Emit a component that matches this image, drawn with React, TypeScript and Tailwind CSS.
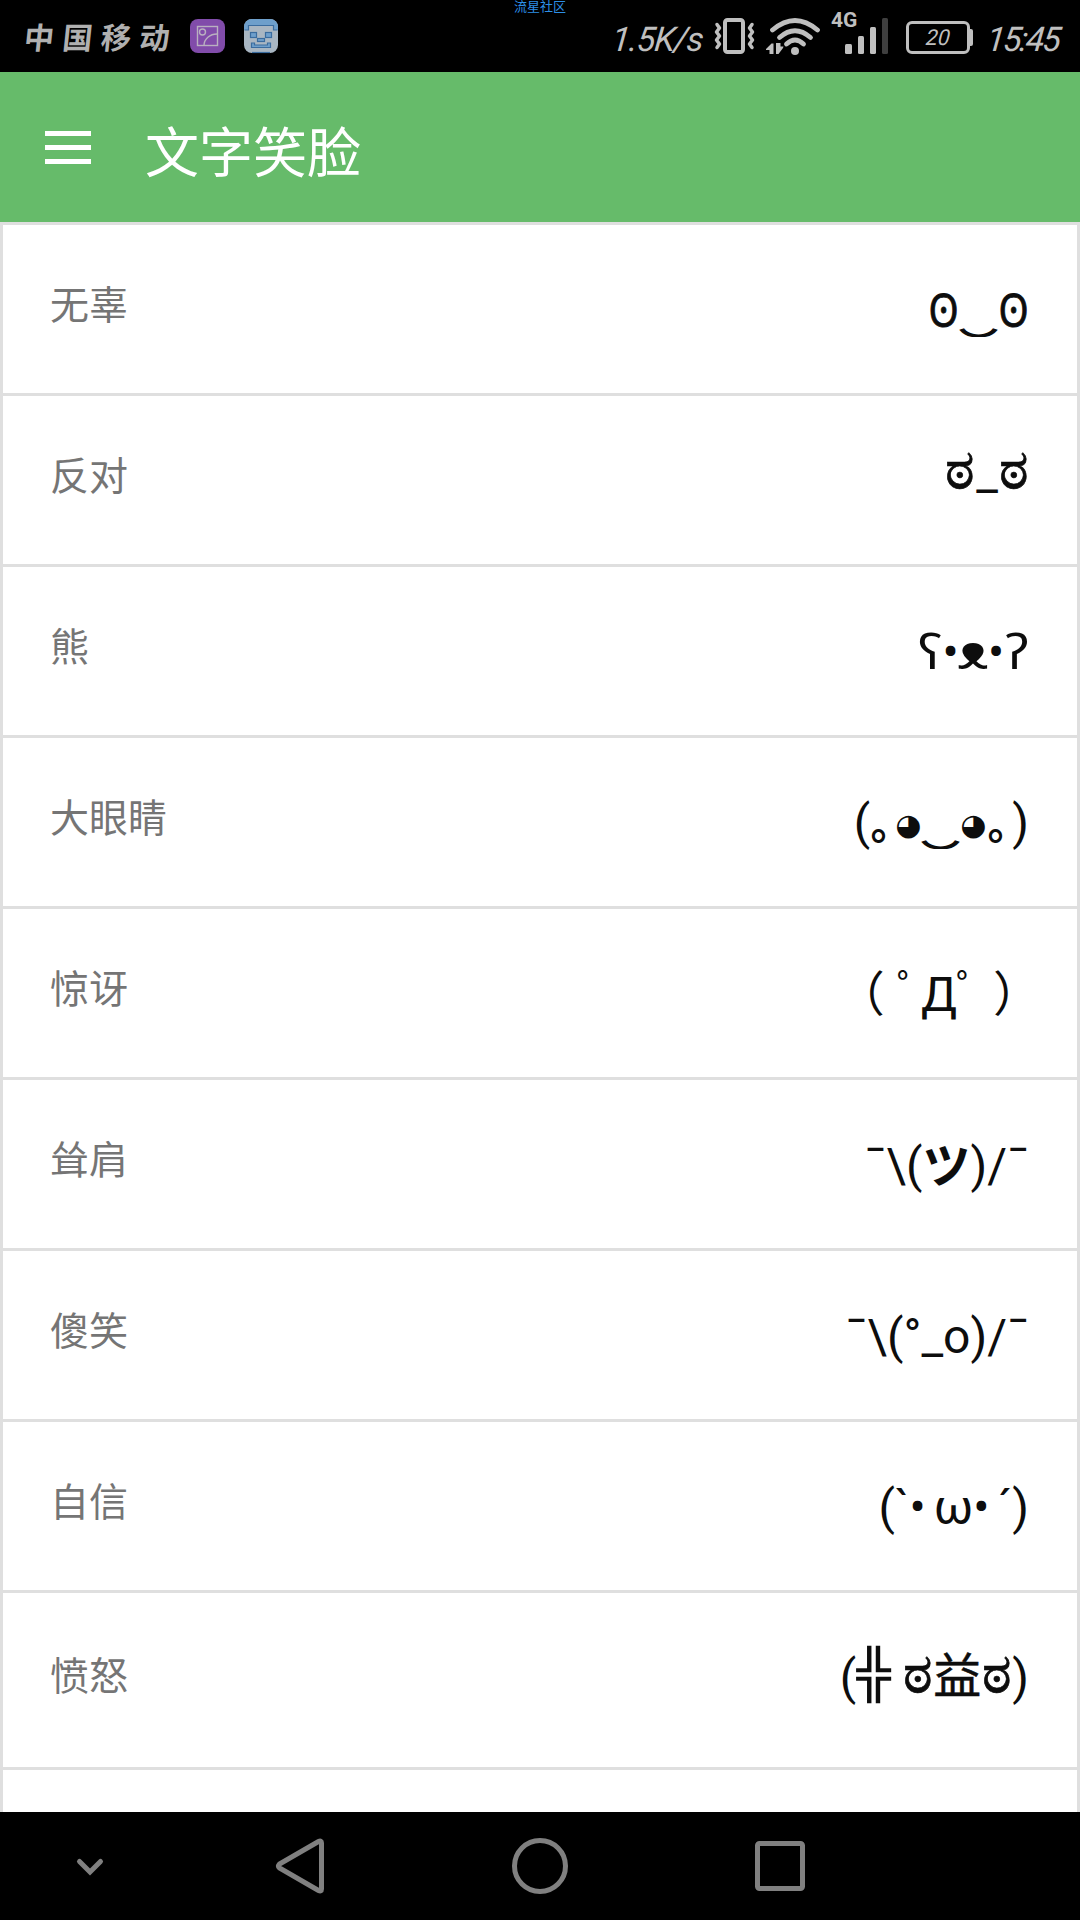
type Part = {
  text: string;
  className?: string;
};

type Face = {
  name: string;
  parts: Part[];
  className?: string;
};

const eye = "w-[31px] scale-x-[.84] text-[46px] [-webkit-text-stroke:0.8px_#0d0d0d]";
const smile = "origin-[50%_85%] scale-x-[1.3] scale-y-[.75] [-webkit-text-stroke:1.8px_#0d0d0d]";
const bigEye = "w-[22px] -translate-y-[4px] text-[30px]";
const kannada = "text-[56px] [-webkit-text-stroke:0.7px_#0d0d0d]";

const faces: Face[] = [
  {
    name: "无辜",
    className: "mt-[3px]",
    parts: [
      { text: "ʘ", className: eye },
      { text: "‿", className: `w-[39px] ${smile}` },
      { text: "ʘ", className: eye },
    ],
  },
  {
    name: "反对",
    className: "-mt-[17px]",
    parts: [
      { text: "ಠ", className: `w-[30px] ${kannada}` },
      { text: "_", className: "w-[24px]" },
      { text: "ಠ", className: `w-[30px] ${kannada}` },
    ],
  },
  {
    name: "熊",
    className: "mt-[3px]",
    parts: [
      { text: "ʕ", className: "w-[24px] scale-x-[1.12]" },
      { text: "•", className: "w-[17px]" },
      { text: "ᴥ", className: "w-[28px] scale-x-[1.25]" },
      { text: "•", className: "w-[18px]" },
      { text: "ʔ", className: "w-[24px] scale-x-[1.12]" },
    ],
  },
  {
    name: "大眼睛",
    className: "mt-[8px]",
    parts: [
      { text: "(" },
      { text: "｡", className: "mr-[13px] w-[14px] origin-[40%_75%] scale-[.85] justify-start font-bold" },
      { text: "◕", className: bigEye },
      { text: "‿", className: `w-[43px] ${smile}` },
      { text: "◕", className: bigEye },
      { text: "｡", className: "ml-[3px] mr-[11px] w-[14px] origin-[40%_75%] scale-[.85] justify-start font-bold" },
      { text: ")" },
    ],
  },
  {
    name: "惊讶",
    className: "mt-[3px]",
    parts: [
      { text: "（", className: "mr-[12px]" },
      { text: "ﾟ", className: "origin-[50%_20%] -translate-y-[1px] scale-y-[.8]" },
      { text: "Д" },
      { text: "ﾟ", className: "origin-[50%_20%] -translate-x-[1px] -translate-y-[1px] scale-y-[.8]" },
      { text: "）", className: "-mr-[12px] ml-[12px]" },
    ],
  },
  {
    name: "耸肩",
    parts: [{ text: "¯\\(" }, { text: "ツ", className: "translate-y-[1px] font-bold" }, { text: ")/¯" }],
  },
  { name: "傻笑", parts: [{ text: "¯\\(°_o)/¯" }] },
  {
    name: "自信",
    parts: [
      { text: "(`" },
      { text: "•", className: "w-[24px] -translate-x-[4px]" },
      { text: "ω" },
      { text: "•", className: "w-[24px] -translate-x-[4px]" },
      { text: "´)" },
    ],
  },
  {
    name: "愤怒",
    className: "-mt-[8px]",
    parts: [
      { text: "(" },
      {
        text: "╬",
        className: "mr-[11px] w-[35px] -translate-y-[3px] scale-x-[1.18] font-['DejaVu_Sans_Mono',monospace]",
      },
      { text: "ಠ", className: `w-[31px] -translate-y-[1px] ${kannada}` },
      { text: "益", className: "w-[48px] -translate-y-[1px] [-webkit-text-stroke:0.5px_#0d0d0d]" },
      { text: "ಠ", className: `w-[31px] -translate-y-[1px] ${kannada}` },
      { text: ")" },
    ],
  },
];

const GalleryIcon = () => (
  <svg width="35" height="35" viewBox="0 0 35 35" fill="none">
    <rect width="35" height="34" rx="8" fill="#814caa" />
    <g stroke="#b9b0c0" strokeWidth="1.4">
      <rect x="7.5" y="7.5" width="20" height="19" />
      <circle cx="12.5" cy="13" r="3" />
      <path d="M14 26.5C14 20 20 15 27 15" />
    </g>
  </svg>
);

const RobotIcon = () => (
  <svg width="34" height="35" viewBox="0 0 34 35" fill="none">
    <rect width="34" height="34" rx="8" fill="#a9b6c2" />
    <path d="M0 11V8a8 8 0 0 1 8-8h18a8 8 0 0 1 8 8v3h-4V6.500H4V11z" fill="#6e9fcb" />
    <g stroke="#3a6c9f" strokeWidth="1.2">
      <path d="M0.500 11H4.500V6.500H29.500V11H33.500" />
      <rect x="6.500" y="13.500" width="6" height="5" fill="#6e9fcb" />
      <rect x="21.500" y="13.500" width="6" height="5" fill="#6e9fcb" />
      <rect x="13.500" y="19.500" width="7" height="3" fill="#6e9fcb" />
      <path d="M7.500 24v4.500h19V24h-3v2h-13v-2z" fill="#6e9fcb" />
      <path d="M8 33.500h18" />
    </g>
  </svg>
);

const VibrateIcon = () => (
  <svg width="42" height="36" viewBox="0 0 42 36" fill="none" stroke="#bfbfbf">
    <rect x="11" y="2" width="18" height="32" rx="2.500" strokeWidth="4" />
    <path d="M3 6.500l2.500 3.500-3 4 3 4-3 4 3 4L3 29.500" strokeWidth="3.500" strokeLinecap="round" strokeLinejoin="round" />
    <path d="M38 6.500L35.500 10l3 4-3 4 3 4-3 4 2.500 3.500" strokeWidth="3.500" strokeLinecap="round" strokeLinejoin="round" />
  </svg>
);

const WifiIcon = () => (
  <svg width="55" height="38" viewBox="0 0 55 38" fill="none" stroke="#bfbfbf">
    <g strokeWidth="4.800" strokeLinecap="round">
      <path d="M6.500 12Q29 -7 51.500 12" />
      <path d="M13.500 19.500Q29 6 44.500 19.500" />
      <path d="M20.500 26Q29 18 37.500 26" />
    </g>
    <circle cx="29" cy="33" r="4" fill="#bfbfbf" stroke="none" />
    <path
      d="M0 31l5.500-5.500H7.500V36H3.500V32H0zM10 25h4.500v3.500H17.500L17 30l-4.500 6H10z"
      fill="#bfbfbf"
      stroke="none"
    />
  </svg>
);

const SignalIcon = () => (
  <svg width="44" height="36" viewBox="0 0 44 36" fill="#bfbfbf">
    <rect x="0" y="26" width="7" height="10" rx="1.500" />
    <rect x="13" y="18" width="6" height="18" rx="1.500" />
    <rect x="25" y="9" width="6" height="27" rx="1.500" />
    <rect x="37" y="0" width="6" height="36" rx="1.500" fill="#3f3f3f" />
  </svg>
);

const StatusBar = () => (
  <div className="relative flex h-[72px] items-start bg-black pl-6 pr-[17px] text-[#bfbfbf]">
    <div className="mt-[19px] w-[166px] -skew-x-6 whitespace-nowrap text-[30px] font-bold leading-[40px] tracking-[8.5px] text-[#b0b0b0]">
      中国移动
    </div>
    <div className="mt-[19px] flex gap-[19px]">
      <GalleryIcon />
      <RobotIcon />
    </div>
    <div className="absolute left-[514px] top-0 whitespace-nowrap text-[13px] leading-[13px] text-[#2d8fe6]">
      流星社区
    </div>
    <div className="ml-auto flex items-start">
      <div className="mt-[20px] w-[102px] -skew-x-6 whitespace-nowrap text-[34px] italic leading-[38px] tracking-[-1px]">
        1.5K/s
      </div>
      <div className="mt-[18px] w-[52px]">
        <VibrateIcon />
      </div>
      <div className="mt-[18px] w-[65px]">
        <WifiIcon />
      </div>
      <div className="relative mt-[18px] w-[75px] pl-[14px]">
        <SignalIcon />
        <span className="absolute -top-[10px] left-0 text-[21px] font-bold leading-[24px]">4G</span>
      </div>
      <div className="mt-[21px] flex w-[81px] items-center">
        <div className="flex h-[33px] w-[64px] items-center justify-center rounded-[6px] border-[3px] border-[#bfbfbf] text-[22px] italic leading-none">
          <span className="-skew-x-6">20</span>
        </div>
        <div className="h-[17px] w-[3px] rounded-r-[2px] bg-[#bfbfbf]" />
      </div>
      <div className="mt-[20px] w-[76px] -skew-x-6 whitespace-nowrap text-[34px] italic leading-[38px] tracking-[-2px]">
        15:45
      </div>
    </div>
  </div>
);

const Header = () => (
  <div className="flex h-[150px] items-center bg-[#66bb6a] pl-[45px] text-white">
    <div className="flex w-[46px] flex-col gap-[9px]">
      <div className="h-[5px] bg-white" />
      <div className="h-[5px] bg-white" />
      <div className="h-[5px] bg-white" />
    </div>
    <h1 className="ml-[54px] mt-[16px] text-[54px] leading-[60px]">文字笑脸</h1>
  </div>
);

const FaceText = ({ parts }: { parts: Part[] }) => (
  <>
    {parts.map((part, i) => (
      <span key={i} className={`flex justify-center ${part.className ?? ""}`}>
        {part.text}
      </span>
    ))}
  </>
);

const FaceList = () => (
  <div className="flex-1 overflow-hidden border-x-[3px] border-t-[3px] border-[#dfdfdf] bg-white">
    {faces.map((item) => (
      <div
        key={item.name}
        className="flex h-[171px] items-center justify-between border-b-[3px] border-[#dfdfdf] pl-[47px] pr-12 last:h-[177px]"
      >
        <div className="-mt-[6px] text-[39px] leading-[48px] text-[#757575]">{item.name}</div>
        <div
          className={`flex items-baseline whitespace-pre text-[48px] leading-[56px] text-[#0d0d0d] ${item.className ?? "mt-[3px]"}`}
        >
          <FaceText parts={item.parts} />
        </div>
      </div>
    ))}
  </div>
);

const NavBar = () => (
  <div className="flex h-[108px] items-start bg-black">
    <svg width="1080" height="108" viewBox="0 0 1080 108" fill="none" stroke="#808080" strokeWidth="5">
      <path d="M79.500 49.500L90 60l10.500-10.500" strokeLinecap="round" />
      <path d="M321.500 31v46q0 3-3 1.500L279.500 56q-2-2 0-4L318.500 29.500q3-1.500 3 1.500z" />
      <circle cx="540" cy="54" r="25.500" />
      <rect x="757.500" y="31.500" width="45" height="45" rx="2" />
    </svg>
  </div>
);

export default function App() {
  return (
    <div className="flex h-[1920px] w-[1080px] flex-col overflow-hidden font-['Roboto','Noto_Sans','Noto_Sans_CJK_SC','DejaVu_Sans',sans-serif]">
      <StatusBar />
      <Header />
      <FaceList />
      <NavBar />
    </div>
  );
}
